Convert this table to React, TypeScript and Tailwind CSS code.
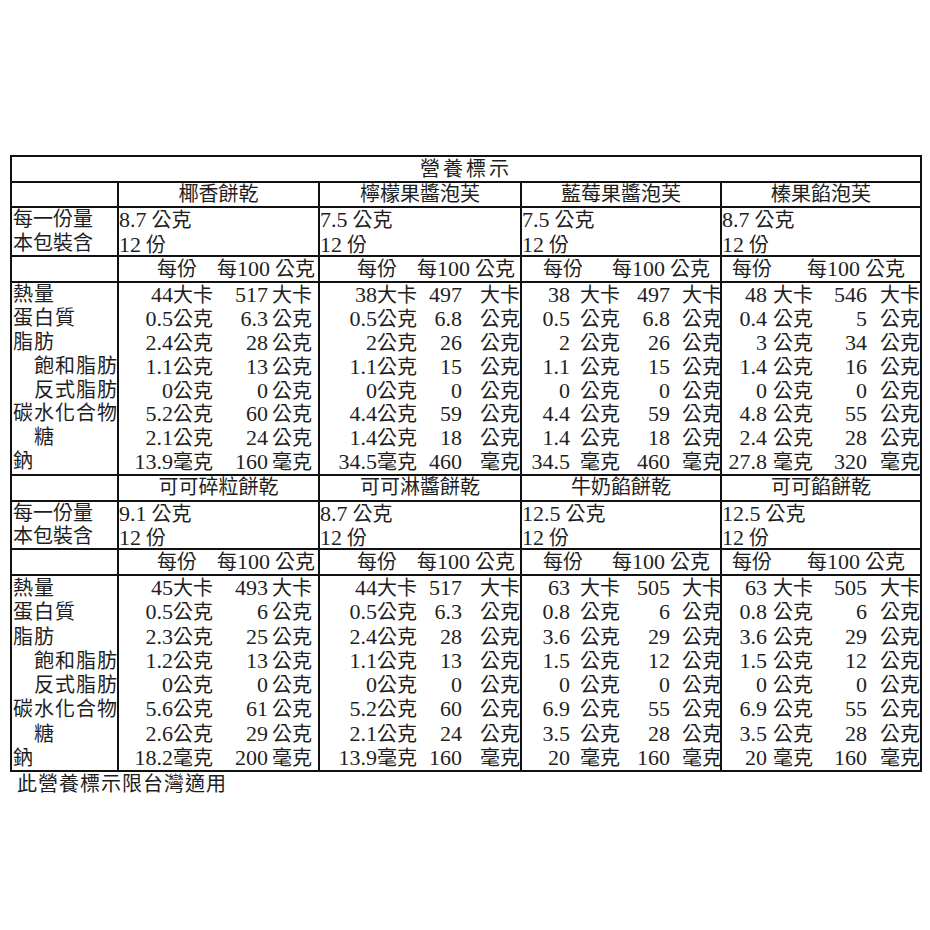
import React from "react";

type N = [string, string, string, string];
type Product = { name: string; serving: string; count: string; rows: N[] };

const LABELS: { t: string; indent?: boolean }[] = [
  { t: "熱量" },
  { t: "蛋白質" },
  { t: "脂肪" },
  { t: "飽和脂肪", indent: true },
  { t: "反式脂肪", indent: true },
  { t: "碳水化合物" },
  { t: "糖", indent: true },
  { t: "鈉" },
];

const mk = (a: string[][]): N[] =>
  a.map((r, i) => {
    const u = i === 0 ? "大卡" : i === 7 ? "毫克" : "公克";
    return [r[0], u, r[1], u];
  });

const block1: Product[] = [
  {
    name: "椰香餅乾",
    serving: "8.7 公克",
    count: "12 份",
    rows: mk([["44", "517"], ["0.5", "6.3"], ["2.4", "28"], ["1.1", "13"], ["0", "0"], ["5.2", "60"], ["2.1", "24"], ["13.9", "160"]]),
  },
  {
    name: "檸檬果醬泡芙",
    serving: "7.5 公克",
    count: "12 份",
    rows: mk([["38", "497"], ["0.5", "6.8"], ["2", "26"], ["1.1", "15"], ["0", "0"], ["4.4", "59"], ["1.4", "18"], ["34.5", "460"]]),
  },
  {
    name: "藍莓果醬泡芙",
    serving: "7.5 公克",
    count: "12 份",
    rows: mk([["38", "497"], ["0.5", "6.8"], ["2", "26"], ["1.1", "15"], ["0", "0"], ["4.4", "59"], ["1.4", "18"], ["34.5", "460"]]),
  },
  {
    name: "榛果餡泡芙",
    serving: "8.7 公克",
    count: "12 份",
    rows: mk([["48", "546"], ["0.4", "5"], ["3", "34"], ["1.4", "16"], ["0", "0"], ["4.8", "55"], ["2.4", "28"], ["27.8", "320"]]),
  },
];

const block2: Product[] = [
  {
    name: "可可碎粒餅乾",
    serving: "9.1 公克",
    count: "12 份",
    rows: mk([["45", "493"], ["0.5", "6"], ["2.3", "25"], ["1.2", "13"], ["0", "0"], ["5.6", "61"], ["2.6", "29"], ["18.2", "200"]]),
  },
  {
    name: "可可淋醬餅乾",
    serving: "8.7 公克",
    count: "12 份",
    rows: mk([["44", "517"], ["0.5", "6.3"], ["2.4", "28"], ["1.1", "13"], ["0", "0"], ["5.2", "60"], ["2.1", "24"], ["13.9", "160"]]),
  },
  {
    name: "牛奶餡餅乾",
    serving: "12.5 公克",
    count: "12 份",
    rows: mk([["63", "505"], ["0.8", "6"], ["3.6", "29"], ["1.5", "12"], ["0", "0"], ["6.9", "55"], ["3.5", "28"], ["20", "160"]]),
  },
  {
    name: "可可餡餅乾",
    serving: "12.5 公克",
    count: "12 份",
    rows: mk([["63", "505"], ["0.8", "6"], ["3.6", "29"], ["1.5", "12"], ["0", "0"], ["6.9", "55"], ["3.5", "28"], ["20", "160"]]),
  },
];

// per-column sub layout
const COLS = [
  { grid: "grid grid-cols-[54px_44px_51px_1fr]", b: "", d: "pl-[4px]", hp: "pl-[38px]", hw: "w-[60px]" },
  { grid: "grid grid-cols-[57px_44px_41px_1fr]", b: "", d: "pl-[18px]", hp: "pl-[37px]", hw: "w-[60px]" },
  { grid: "grid grid-cols-[48px_54px_46px_1fr]", b: "pl-[10px]", d: "pl-[12px]", hp: "pl-[21px]", hw: "w-[69px]" },
  { grid: "grid grid-cols-[45px_50px_50px_1fr]", b: "pl-[6px]", d: "pl-[13px]", hp: "pl-[10px]", hw: "w-[75px]" },
];

const ROW = "grid grid-cols-[107px_201px_202px_200px_198px]";
const BR = "border-r-2 border-[#111]";

function Mixed({ s }: { s: string }) {
  const parts = s.split(/([0-9.]+)/);
  return (
    <>
      {parts.map((p, i) =>
        /^[0-9.]+$/.test(p) ? (
          <span key={i} className="text-[22px]">
            {p}
          </span>
        ) : (
          <React.Fragment key={i}>{p}</React.Fragment>
        )
      )}
    </>
  );
}

function Block({
  products,
  nameH,
  servH,
  servLead,
  nutH,
  last,
}: {
  products: Product[];
  nameH: string;
  servH: string;
  servLead: string;
  nutH: string;
  last?: boolean;
}) {
  return (
    <>
      {/* names */}
      <div className={`${ROW} ${nameH} border-b-2 border-[#111]`}>
        <div className={BR}></div>
        {products.map((p, i) => (
          <div key={i} className={`${i < 3 ? BR : ""} text-center leading-[23px] whitespace-nowrap`}>
            {p.name}
          </div>
        ))}
      </div>
      {/* serving */}
      <div className={`${ROW} ${servH} border-b-2 border-[#111]`}>
        <div className={`${BR} pl-[1px] ${servLead}`}>
          <div>每一份量</div>
          <div>本包裝含</div>
        </div>
        {products.map((p, i) => (
          <div key={i} className={`${i < 3 ? BR : ""} ${servLead} whitespace-nowrap`}>
            <div>
              <Mixed s={p.serving} />
            </div>
            <div>
              <Mixed s={p.count} />
            </div>
          </div>
        ))}
      </div>
      {/* header */}
      <div className={`${ROW} h-[26px] border-b-2 border-[#111]`}>
        <div className={BR}></div>
        {products.map((p, i) => (
          <div key={i} className={`${i < 3 ? BR : ""} flex items-baseline ${COLS[i].hp} leading-[24px] whitespace-nowrap`}>
            <span className={`${COLS[i].hw} shrink-0`}>每份</span>
            <span>
              <Mixed s="每100 公克" />
            </span>
          </div>
        ))}
      </div>
      {/* nutrients */}
      <div className={`${ROW} ${last ? "" : "border-b-2 border-[#111]"}`}>
        <div className={`${BR} pl-[1px]`}>
          {LABELS.map((l, k) => (
            <div key={k} className={`${nutH} whitespace-nowrap tracking-[1px] ${l.indent ? "pl-[21px]" : ""}`}>
              {l.t}
            </div>
          ))}
        </div>
        {products.map((p, i) => (
          <div key={i} className={`${i < 3 ? BR : ""}`}>
            {p.rows.map((r, k) => (
              <div key={k} className={`${COLS[i].grid} items-baseline ${nutH} whitespace-nowrap`}>
                <span className="text-right text-[22px]">{r[0]}</span>
                <span className={COLS[i].b}>{r[1]}</span>
                <span className="text-right text-[22px]">{r[2]}</span>
                <span className={COLS[i].d}>{r[3]}</span>
              </div>
            ))}
          </div>
        ))}
      </div>
    </>
  );
}

export default function App() {
  return (
    <div className="w-[930px] h-[930px] bg-white text-[#1e1e1e] font-['Liberation_Serif','Noto_Sans_CJK_TC',serif] text-[20px]">
      <div className="pt-[155px] pl-[10px]">
        <div className="w-[912px] border-2 border-[#111]">
          <div className="h-[26px] border-b-2 border-[#111] text-center leading-[24px] tracking-[3px]">營養標示</div>
          <Block
            products={block1}
            nameH="h-[25px]"
            servH="h-[49px]"
            servLead="leading-[23.5px]"
            nutH="h-[23.875px] leading-[23.875px]"
          />
          <Block
            products={block2}
            nameH="h-[26px]"
            servH="h-[48px]"
            servLead="leading-[23px]"
            nutH="h-[24.25px] leading-[24.25px]"
            last
          />
        </div>
        <div className="pl-[7px] leading-[24px] tracking-[1px]">此營養標示限台灣適用</div>
      </div>
    </div>
  );
}
